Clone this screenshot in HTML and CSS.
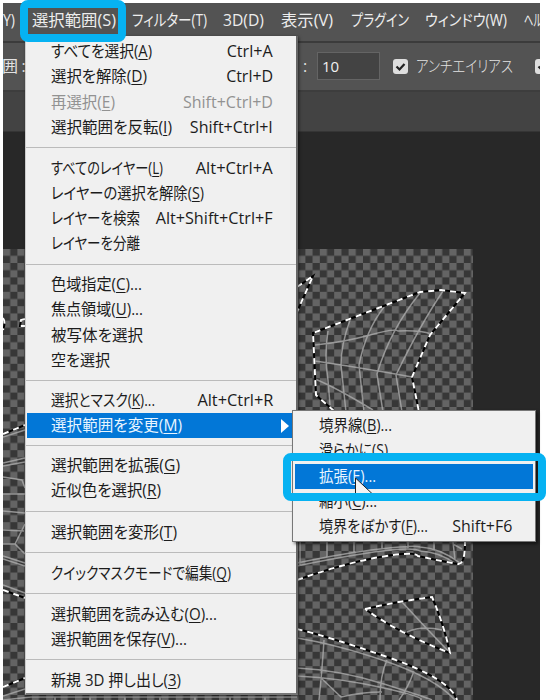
FILE: index.html
```
<!DOCTYPE html>
<html lang="ja">
<head>
<meta charset="utf-8">
<title>選択範囲</title>
<link rel="stylesheet" href="styles.css">
</head>
<body>
<div class="app">
  <nav class="menubar">
    <span class="fit" data-w="12">Y)</span><span class="fit" data-w="84">選択範囲(S)</span><span class="fit" data-w="75">フィルター(T)</span><span class="fit" data-w="41">3D(D)</span><span class="fit" data-w="52">表示(V)</span><span class="fit" data-w="58">プラグイン</span><span class="fit" data-w="82">ウィンドウ(W)</span><span class="fit" data-w="18">ヘル</span>
  </nav>
  <div class="options">
    <span class="opt-left">囲 :</span><span class="opt-colon">:</span><span class="field">10</span>
    <span class="check"><svg viewBox="0 0 15 15"><path d="M3.5 7.5 6.5 10.5 11.5 5"/></svg></span>
    <span class="opt-label fit" data-w="97">アンチエイリアス</span>
    <span class="check second"><svg viewBox="0 0 15 15"><path d="M3.5 7.5 6.5 10.5 11.5 5"/></svg></span>
  </div>
  <div class="tabs"></div>
  <main class="workspace">
    <svg class="canvas" viewBox="3 249 470 451">
      <defs>
        <pattern id="chk" x="3" y="248.6" width="14.4" height="14.4" patternUnits="userSpaceOnUse"><path class="light" d="M0 0h14.4v14.4H0z"/><path class="dark" d="M7.2 0h7.2v7.2H7.2zM0 7.2h7.2v7.2H0z"/></pattern>
        <g id="outlines">
          <path d="M297 287 313 276 297 312M334 411 316 395 313 333 420 292 441 290 465 293 430 335 412 377 419 412M297 580Q345 563 380 557T418 556Q440 561 458 564Q465 565 465 542M365 609Q400 601 432 597Q444 625 450 653Q400 634 365 609M297 629Q330 637 390 658T457 700"/>
          <path d="M3 434 25 425M3 590 25 598M3 687 25 678M3 318Q6 322 3 330M25 319 21 320 20 326H25"/>
        </g>
      </defs>
      <path fill="url(#chk)" d="M3 249h470v451H3z"/>
      <g class="wire">
        <path d="M315 345Q345 342 370 335T398 331Q420 330 431 334M315 361Q335 364 360 368T412 377M315 379Q335 387 373 410M328 331Q324 355 328 380L330 405M350 320Q341 345 341 365L346 412M384 307Q366 330 359 365L364 412M420 293Q390 330 377 374L383 412M443 291Q420 325 396 375L402 412"/>
        <path d="M297 563Q345 553 380 549T420 547Q440 548 460 563M297 566Q350 555 382 551T420 551Q440 552 456 564M300 542V565M327 542V558M354 542V552M382 542V549M408 542V548M434 542V550M453 542L455 560M453 544 462 549"/>
        <path d="M402 602Q425 627 450 653M407 632Q422 625 442 630"/>
        <path d="M297 638Q335 644 385 661T455 700M297 668Q340 670 384 684T432 700M297 676Q340 678 384 688T420 700M324 640Q322 672 319 700M387 660Q380 675 380 700M414 671Q408 688 399 700M321 678 341 697Q362 692 382 692"/>
        <path d="M3 437 25 430M3 463 25 458M3 466 25 462M3 477 22 480 25 488M3 494H25M3 511 25 513M3 530 24 531M3 544H15L25 524M15 544 25 554M3 556 25 563M3 559 25 566M3 585 25 593M3 696 25 689M3 700 31 697H297M55 697V700M90 697V700M125 697V700M160 697V700M195 697V700M230 697V700M265 697V700"/>
      </g>
      <use href="#outlines" class="ants"/>
      <use href="#outlines" class="dash"/>
    </svg>
  </main>
</div>

<div class="menu">
  <section class="g1">
    <div class="item"><span class="fit" data-w="101">すべてを選択(<u>A</u>)</span><kbd class="fit" data-w="46">Ctrl+A</kbd></div>
    <div class="item"><span class="fit" data-w="96">選択を解除(<u>D</u>)</span><kbd class="fit" data-w="47">Ctrl+D</kbd></div>
    <div class="item off"><span class="fit" data-w="64">再選択(<u>E</u>)</span><kbd class="fit" data-w="90">Shift+Ctrl+D</kbd></div>
    <div class="item"><span class="fit" data-w="121">選択範囲を反転(<u>I</u>)</span><kbd class="fit" data-w="83">Shift+Ctrl+I</kbd></div>
  </section>
  <section>
    <div class="item"><span class="fit" data-w="112">すべてのレイヤー(<u>L</u>)</span><kbd class="fit" data-w="77">Alt+Ctrl+A</kbd></div>
    <div class="item"><span class="fit" data-w="153">レイヤーの選択を解除(<u>S</u>)</span></div>
    <div class="item"><span class="fit" data-w="89">レイヤーを検索</span><kbd class="fit" data-w="117">Alt+Shift+Ctrl+F</kbd></div>
    <div class="item"><span class="fit" data-w="89">レイヤーを分離</span></div>
  </section>
  <section>
    <div class="item"><span class="fit" data-w="91">色域指定(<u>C</u>)...</span></div>
    <div class="item"><span class="fit" data-w="92">焦点領域(<u>U</u>)...</span></div>
    <div class="item"><span class="fit" data-w="92">被写体を選択</span></div>
    <div class="item"><span class="fit" data-w="59">空を選択</span></div>
  </section>
  <section>
    <div class="item"><span class="fit" data-w="104">選択とマスク(<u>K</u>)...</span><kbd class="fit" data-w="76">Alt+Ctrl+R</kbd></div>
    <div class="item active"><span class="fit" data-w="131">選択範囲を変更(<u>M</u>)</span><i class="arrow"></i></div>
  </section>
  <section>
    <div class="item"><span class="fit" data-w="129">選択範囲を拡張(<u>G</u>)</span></div>
    <div class="item"><span class="fit" data-w="110">近似色を選択(<u>R</u>)</span></div>
  </section>
  <section>
    <div class="item"><span class="fit" data-w="126">選択範囲を変形(<u>T</u>)</span></div>
  </section>
  <section>
    <div class="item"><span class="fit" data-w="180">クイックマスクモードで編集(<u>Q</u>)</span></div>
  </section>
  <section>
    <div class="item"><span class="fit" data-w="166">選択範囲を読み込む(<u>O</u>)...</span></div>
    <div class="item"><span class="fit" data-w="136">選択範囲を保存(<u>V</u>)...</span></div>
  </section>
  <section class="g9">
    <div class="item"><span class="fit" data-w="130">新規 3D 押し出し(<u>3</u>)</span></div>
  </section>
</div>

<div class="submenu">
  <div class="item"><span class="fit" data-w="73">境界線(<u>B</u>)...</span></div>
  <div class="item"><span class="fit" data-w="69">滑らかに(<u>S</u>)</span></div>
  <div class="item active"><span class="fit" data-w="57">拡張(<u>E</u>)...</span></div>
  <div class="item"><span class="fit" data-w="58">縮小(<u>C</u>)...</span></div>
  <div class="item"><span class="fit" data-w="109">境界をぼかす(<u>F</u>)...</span><kbd class="fit" data-w="60">Shift+F6</kbd></div>
</div>
<svg class="cursor" viewBox="0 0 18 19"><path d="M.5 0V19H13L17.500 16Z"/></svg>
<div class="ring ring-top"></div>
<div class="ring ring-sub"></div>
<script src="fit.js"></script>
</body>
</html>
```
FILE: styles.css
```
* { box-sizing: border-box; }
body { margin: 0; width: 552px; height: 700px; overflow: hidden; position: relative; background: #fff; font: 16px/25px "Open Sans", "Noto Sans CJK JP", sans-serif; color: #1c1c1c; font-feature-settings: "palt"; }
.app { margin: 3px 0 0 3px; width: 537px; height: 697px; overflow: hidden; background: #282828; display: flex; flex-direction: column; }
.fit { display: inline-block; white-space: nowrap; justify-self: start; transform-origin: 0 50%; }
kbd.fit { transform-origin: 100% 50%; }
.menubar { height: 40px; flex: none; background: #535353; border-bottom: 2px solid #3b3b3b; color: #ededed; display: grid; grid-template-columns: 29px 100px 91px 58px 70px 74px 99px 16px; line-height: 34px; }
.options { height: 49px; flex: none; background: #535353; border-bottom: 2px solid #3d3d3d; display: flex; align-items: center; color: #e2e2e2; padding-bottom: 1px; }
.opt-left { flex: none; width: 301px; margin-left: -1px; letter-spacing: -0.3px; }
.opt-colon { flex: none; width: 14px; }
.field { width: 63px; height: 28px; background: #434343; border: 1px solid #646464; padding-left: 4px; font-size: 15px; line-height: 26px; flex: none; color: #f0f0f0; }
.check { flex: none; width: 15px; height: 15px; background: #dedede; border-radius: 3px; margin-left: 13px; display: flex; }
.check svg { width: 15px; height: 15px; fill: none; stroke: #222; stroke-width: 2.2; }
.opt-label { margin-left: 8px; width: 97px; flex: none; font-weight: 300; }
.check.second { margin-left: 22px; }
.tabs { height: 40px; flex: none; background: #434343; border-bottom: 1px solid #353535; }
.workspace { padding-top: 117px; }
.canvas { display: block; width: 470px; height: 451px; }
.light { fill: #646464; }
.dark { fill: #373737; }
.wire { fill: none; stroke: #b0b0b0; stroke-opacity: .75; stroke-width: 1.5; }
.ants, .dash { fill: none; stroke: #000; stroke-width: 2; }
.dash { stroke: #fff; stroke-dasharray: 6 5; }
.menu { position: absolute; left: 25px; top: 36px; width: 273px; height: 659px; background: #f0f0f0; border-right: 2px solid #666; border-bottom: 2px solid #777; border-left: 1px solid #ccc; display: grid; grid-template-rows: 112px 116.5px 116px 65px 66.5px 41px 41px 66px 1fr; box-shadow: 1px 1px 3px #0008; }
.menu section { padding: 7.4px 2px 0 1px; border-bottom: 1.6px solid #bbb; }
.menu .g1 { padding-top: 3px; }
.menu .g9 { border-bottom: 0; }
.item { height: 25.3px; padding: 0 21px 0 24px; display: flex; justify-content: space-between; align-items: center; white-space: nowrap; }
kbd { font: inherit; }
u { text-underline-offset: 2px; text-decoration-thickness: 1.3px; text-decoration-skip-ink: none; }
.off { color: #929292; }
.active { background: #0277d7; color: #e8f5ff; }
.arrow { border-left: 8px solid #fff; border-top: 7px solid transparent; border-bottom: 7px solid transparent; margin-right: -16px; }
.submenu { position: absolute; left: 292px; top: 410px; width: 244px; height: 132px; background: #f0f0f0; border: 1px solid #777; padding: 2px; box-shadow: 2px 2px 3px #0008; }
.cursor { position: absolute; left: 355px; top: 478px; width: 18px; height: 19px; }
.cursor path { fill: #f4f4f4; stroke: #222; stroke-width: 1; }
.ring { position: absolute; border: 8px solid #06b2f2; border-radius: 8px; }
.ring-top { left: 20px; top: 0; width: 106px; height: 42px; }
.ring-sub { left: 283px; top: 453px; width: 263px; height: 48px; }
```
FILE: fit.js
```
// Scale each label horizontally to its designed width.
document.querySelectorAll('.fit').forEach(el => {
  const range = document.createRange();
  range.selectNodeContents(el);
  const natural = range.getBoundingClientRect().width;
  el.style.transform = `scaleX(${el.dataset.w / natural})`;
});
```
